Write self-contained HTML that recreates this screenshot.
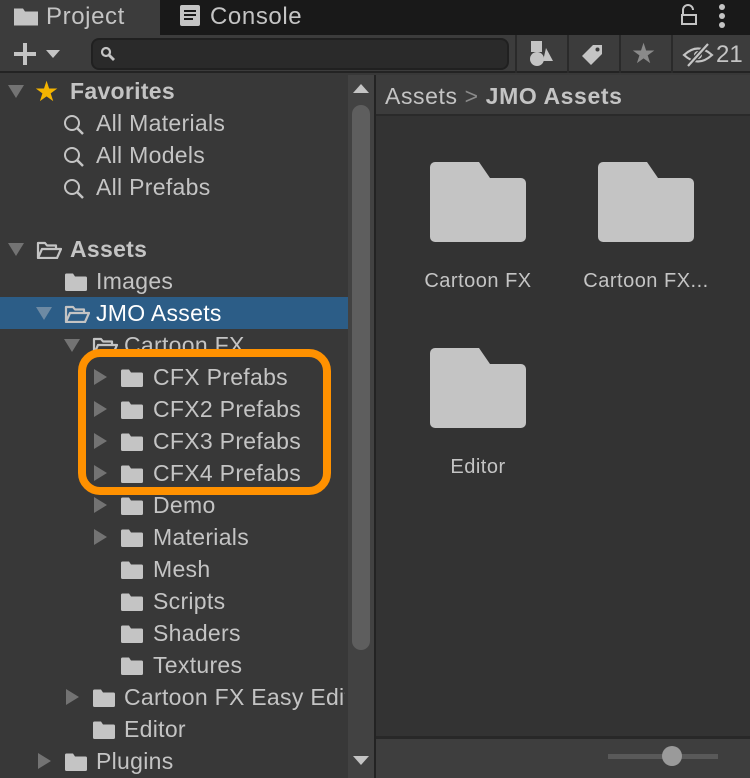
<!DOCTYPE html>
<html><head><style>
*{margin:0;padding:0;box-sizing:border-box}
body{width:750px;height:778px;overflow:hidden;background:#383838;font-family:"Liberation Sans","DejaVu Sans",sans-serif;color:#c4c4c4;position:relative}
.a{position:absolute}
.row{position:absolute;height:32px;line-height:32px;font-size:23px;letter-spacing:0.3px;white-space:nowrap;left:0;width:348px}
.tri{position:absolute;width:0;height:0}
.td{border-left:8px solid transparent;border-right:8px solid transparent;border-top:13px solid #737373;top:10px}
.tr{border-top:8px solid transparent;border-bottom:8px solid transparent;border-left:13px solid #737373;top:8px}
.fd{position:absolute;top:8px;width:24px;height:18px}
</style></head><body>
<svg width="0" height="0" style="position:absolute"><defs>
<symbol id="f" viewBox="0 0 24 18"><path d="M1 2a1.5 1.5 0 0 1 1.5-1.5H9l2 3h10.5A1.5 1.5 0 0 1 23 5v11.5A1.5 1.5 0 0 1 21.5 18h-19A1.5 1.5 0 0 1 1 16.5z" fill="#c4c4c4"/></symbol>
<symbol id="o" viewBox="0 0 26 18"><path d="M2 17V2h7l2 2.5h9V7M2 17l4-9h19l-4 9z" fill="none" stroke="#c4c4c4" stroke-width="2.2" stroke-linejoin="round"/></symbol>
</defs></svg>
<div class="a" style="left:0;top:0;width:750px;height:35px;background:#191919"></div>
<div class="a" style="left:0;top:0;width:160px;height:35px;background:#3c3c3c"></div>
<svg class="a" style="left:14px;top:7px" width="24" height="19"><path d="M0 1.5h9l2 3h13v14H0z" fill="#c4c4c4"/></svg>
<div class="a" style="left:46px;top:2px;font-size:24px;line-height:30px;letter-spacing:0.6px">Project</div>
<svg class="a" style="left:180px;top:5px" width="20" height="22"><rect width="20" height="21" rx="2" fill="#c4c4c4"/><path d="M4 6h12M4 10h12M4 14h9" stroke="#191919" stroke-width="2"/></svg>
<div class="a" style="left:210px;top:2px;font-size:24px;line-height:30px;letter-spacing:0.6px">Console</div>
<svg class="a" style="left:680px;top:4px" width="18" height="22"><path d="M3 10V6a5 5 0 0 1 10 0" fill="none" stroke="#c4c4c4" stroke-width="2"/><rect x="2" y="11" width="14" height="9" fill="none" stroke="#c4c4c4" stroke-width="2"/></svg>
<div class="a" style="left:719px;top:4px;width:6px;height:6px;border-radius:3px;background:#c4c4c4;box-shadow:0 9px 0 #c4c4c4,0 18px 0 #c4c4c4"></div>
<div class="a" style="left:0;top:35px;width:750px;height:38px;background:#3c3c3c;border-bottom:2px solid #232323"></div>
<svg class="a" style="left:13px;top:42px" width="24" height="24"><path d="M12 1v22M1 12h22" stroke="#c4c4c4" stroke-width="4"/></svg>
<div class="tri td a" style="left:46px;top:50px;border-top-color:#c4c4c4;border-left-width:7px;border-right-width:7px;border-top-width:8px"></div>
<div class="a" style="left:91px;top:38px;width:418px;height:32px;background:#2a2a2a;border:2px solid #202020;border-radius:8px"></div>
<svg class="a" style="left:100px;top:46px" width="16" height="16"><circle cx="6" cy="6" r="4" fill="none" stroke="#c4c4c4" stroke-width="2.2"/><path d="M9 9l5 5" stroke="#c4c4c4" stroke-width="2.8"/></svg>
<div class="a" style="left:515px;top:35px;width:2px;height:38px;background:#2a2a2a"></div>
<div class="a" style="left:567px;top:35px;width:2px;height:38px;background:#2a2a2a"></div>
<div class="a" style="left:619px;top:35px;width:2px;height:38px;background:#2a2a2a"></div>
<div class="a" style="left:671px;top:35px;width:2px;height:38px;background:#2a2a2a"></div>
<svg class="a" style="left:528px;top:40px" width="28" height="28"><rect x="3" y="1" width="11" height="11" fill="#c4c4c4"/><circle cx="9" cy="19" r="7" fill="#c4c4c4"/><path d="M18 8l7 13h-10z" fill="#c4c4c4"/></svg>
<svg class="a" style="left:580px;top:42px" width="26" height="26"><path d="M2 14L13 3h9v9L11 23z" fill="#c4c4c4"/><circle cx="17.5" cy="7.5" r="2" fill="#3c3c3c"/></svg>
<div class="a" style="left:631px;top:37px;font-size:28px;color:#8a8a8a">★</div>
<svg class="a" style="left:682px;top:42px" width="32" height="26"><path d="M2 13Q16 0 30 13Q16 26 2 13z" fill="none" stroke="#c4c4c4" stroke-width="2.2"/><circle cx="16" cy="13" r="4" fill="#c4c4c4"/><path d="M6 24L26 2" stroke="#3c3c3c" stroke-width="5"/><path d="M6 24L26 2" stroke="#c4c4c4" stroke-width="2.2"/></svg>
<div class="a" style="left:716px;top:40px;font-size:24px;line-height:30px">21</div>
<div class="a" style="left:348px;top:75px;width:26px;height:703px;background:#424242"></div>
<div class="a" style="left:352px;top:105px;width:18px;height:545px;border-radius:9px;background:#5e5e5e"></div>
<div class="tri a" style="left:353px;top:84px;border-left:8px solid transparent;border-right:8px solid transparent;border-bottom:9px solid #c4c4c4"></div>
<div class="tri a" style="left:353px;top:756px;border-left:8px solid transparent;border-right:8px solid transparent;border-top:9px solid #c4c4c4"></div>
<div class="a" style="left:374px;top:75px;width:2px;height:703px;background:#232323"></div>
<div class="row" style="top:75px"><div class="tri td" style="left:8px"></div><span class="a" style="left:34px;top:1px;color:#f4b400;font-size:28px">★</span><b class="a" style="left:70px">Favorites</b></div>
<div class="row" style="top:107px"><svg class="a" style="left:62px;top:7px" width="24" height="24"><circle cx="10" cy="9" r="7" fill="none" stroke="#c4c4c4" stroke-width="2"/><path d="M15 14l6 6" stroke="#c4c4c4" stroke-width="2.5"/></svg><span class="a" style="left:96px">All Materials</span></div>
<div class="row" style="top:139px"><svg class="a" style="left:62px;top:7px" width="24" height="24"><circle cx="10" cy="9" r="7" fill="none" stroke="#c4c4c4" stroke-width="2"/><path d="M15 14l6 6" stroke="#c4c4c4" stroke-width="2.5"/></svg><span class="a" style="left:96px">All Models</span></div>
<div class="row" style="top:171px"><svg class="a" style="left:62px;top:7px" width="24" height="24"><circle cx="10" cy="9" r="7" fill="none" stroke="#c4c4c4" stroke-width="2"/><path d="M15 14l6 6" stroke="#c4c4c4" stroke-width="2.5"/></svg><span class="a" style="left:96px">All Prefabs</span></div>
<div class="row" style="top:233px"><div class="tri td" style="left:8px"></div><svg class="fd" style="left:36px;width:26px" viewBox="0 0 26 18"><use href="#o"/></svg><b class="a" style="left:70px">Assets</b></div>
<div class="row" style="top:265px"><svg class="fd" style="left:64px"><use href="#f"/></svg><span class="a" style="left:96px">Images</span></div>
<div class="row" style="top:297px;background:#2c5d87;color:#fff"><div class="tri td" style="left:36px;border-top-color:#6e8aa3"></div><svg class="fd" style="left:64px;width:26px" viewBox="0 0 26 18"><use href="#o"/></svg><span class="a" style="left:96px">JMO Assets</span></div>
<div class="row" style="top:329px"><div class="tri td" style="left:64px"></div><svg class="fd" style="left:92px;width:26px" viewBox="0 0 26 18"><use href="#o"/></svg><span class="a" style="left:124px">Cartoon FX</span></div>
<div class="row" style="top:361px"><div class="tri tr" style="left:94px"></div><svg class="fd" style="left:120px"><use href="#f"/></svg><span class="a" style="left:153px">CFX Prefabs</span></div>
<div class="row" style="top:393px"><div class="tri tr" style="left:94px"></div><svg class="fd" style="left:120px"><use href="#f"/></svg><span class="a" style="left:153px">CFX2 Prefabs</span></div>
<div class="row" style="top:425px"><div class="tri tr" style="left:94px"></div><svg class="fd" style="left:120px"><use href="#f"/></svg><span class="a" style="left:153px">CFX3 Prefabs</span></div>
<div class="row" style="top:457px"><div class="tri tr" style="left:94px"></div><svg class="fd" style="left:120px"><use href="#f"/></svg><span class="a" style="left:153px">CFX4 Prefabs</span></div>
<div class="row" style="top:489px"><div class="tri tr" style="left:94px"></div><svg class="fd" style="left:120px"><use href="#f"/></svg><span class="a" style="left:153px">Demo</span></div>
<div class="row" style="top:521px"><div class="tri tr" style="left:94px"></div><svg class="fd" style="left:120px"><use href="#f"/></svg><span class="a" style="left:153px">Materials</span></div>
<div class="row" style="top:553px"><svg class="fd" style="left:120px"><use href="#f"/></svg><span class="a" style="left:153px">Mesh</span></div>
<div class="row" style="top:585px"><svg class="fd" style="left:120px"><use href="#f"/></svg><span class="a" style="left:153px">Scripts</span></div>
<div class="row" style="top:617px"><svg class="fd" style="left:120px"><use href="#f"/></svg><span class="a" style="left:153px">Shaders</span></div>
<div class="row" style="top:649px"><svg class="fd" style="left:120px"><use href="#f"/></svg><span class="a" style="left:153px">Textures</span></div>
<div class="row" style="top:681px;overflow:hidden;width:345px"><div class="tri tr" style="left:66px"></div><svg class="fd" style="left:92px"><use href="#f"/></svg><span class="a" style="left:124px">Cartoon FX Easy Editor</span></div>
<div class="row" style="top:713px"><svg class="fd" style="left:92px"><use href="#f"/></svg><span class="a" style="left:124px">Editor</span></div>
<div class="row" style="top:745px"><div class="tri tr" style="left:38px"></div><svg class="fd" style="left:64px"><use href="#f"/></svg><span class="a" style="left:96px">Plugins</span></div>
<div class="a" style="left:78px;top:349px;width:253px;height:146px;border:8px solid #ff9100;border-radius:22px"></div>
<div class="a" style="left:376px;top:75px;width:374px;height:663px;background:#333"></div>
<div class="a" style="left:376px;top:75px;width:374px;height:41px;background:#3c3c3c;border-bottom:2px solid #2a2a2a"></div>
<div class="a" style="left:385px;top:81px;font-size:23px;line-height:30px;letter-spacing:0.6px">Assets <span style="color:#8a8a8a">&gt;</span> <b>JMO Assets</b></div>
<svg class="a" style="left:430px;top:162px" width="96" height="80" viewBox="0 0 96 80"><path d="M0 5a5 5 0 0 1 5-5h44l11 16h31a5 5 0 0 1 5 5v54a5 5 0 0 1-5 5H5a5 5 0 0 1-5-5z" fill="#c4c4c4"/></svg>
<svg class="a" style="left:598px;top:162px" width="96" height="80" viewBox="0 0 96 80"><path d="M0 5a5 5 0 0 1 5-5h44l11 16h31a5 5 0 0 1 5 5v54a5 5 0 0 1-5 5H5a5 5 0 0 1-5-5z" fill="#c4c4c4"/></svg>
<svg class="a" style="left:430px;top:348px" width="96" height="80" viewBox="0 0 96 80"><path d="M0 5a5 5 0 0 1 5-5h44l11 16h31a5 5 0 0 1 5 5v54a5 5 0 0 1-5 5H5a5 5 0 0 1-5-5z" fill="#c4c4c4"/></svg>
<div class="a" style="left:408px;top:270px;width:140px;text-align:center;font-size:20px;letter-spacing:0.5px">Cartoon FX</div>
<div class="a" style="left:572px;top:270px;width:148px;text-align:center;font-size:20px;letter-spacing:0.5px">Cartoon FX...</div>
<div class="a" style="left:408px;top:456px;width:140px;text-align:center;font-size:20px;letter-spacing:0.5px">Editor</div>
<div class="a" style="left:376px;top:736px;width:374px;height:42px;background:#3e3e3e;border-top:3px solid #282828"></div>
<div class="a" style="left:608px;top:754px;width:110px;height:5px;background:#595959"></div>
<div class="a" style="left:662px;top:746px;width:20px;height:20px;border-radius:10px;background:#9a9a9a"></div>
</body></html>
